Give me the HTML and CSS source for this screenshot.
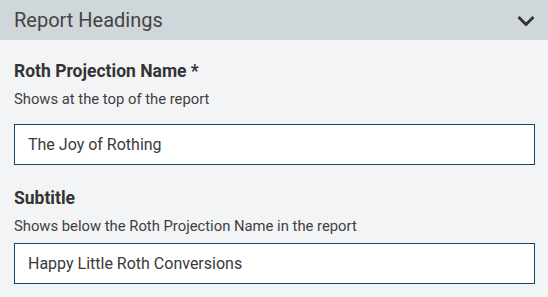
FILE: index.html
```html
<!DOCTYPE html>
<html>
<head>
<meta charset="utf-8">
<link rel="stylesheet" href="styles.css">
</head>
<body>
<section class="panel">
  <header class="panel-header">
    <span class="panel-title">Report Headings</span>
    <svg class="chevron" width="18" height="12" viewBox="0 0 18 12"><path d="M1.5 2 L9 9.5 L16.5 2" fill="none" stroke="#333" stroke-width="3"/></svg>
  </header>
  <div class="panel-body">
    <div class="field field--first">
      <label class="field-label">Roth Projection Name *</label>
      <div class="field-help">Shows at the top of the report</div>
      <div class="field-input">The Joy of Rothing</div>
    </div>
    <div class="field">
      <label class="field-label">Subtitle</label>
      <div class="field-help">Shows below the Roth Projection Name in the report</div>
      <div class="field-input">Happy Little Roth Conversions</div>
    </div>
  </div>
</section>
</body>
</html>
```
FILE: styles.css
```css
html, body { margin: 0; padding: 0; }
body {
  font-family: Roboto, "Liberation Sans", sans-serif;
  background: #f3f4f6;
  color: #333;
  width: 548px;
  height: 297px;
  overflow: hidden;
}
.panel-header {
  height: 40px;
  background: #d0d7db;
  display: flex;
  align-items: center;
  justify-content: space-between;
  padding: 0 13px 0 14px;
  box-sizing: border-box;
}
.panel-title {
  font-size: 20px;
  color: #444;
}
.chevron { display: block; margin-top: 1px; }
.panel-body {
  padding: 21px 13px 0 14px;
}
.field { margin-bottom: 23px; }
.field-label {
  display: block;
  font-weight: 700;
  font-size: 17.5px;
  line-height: 20px;
  color: #333;
}
.field-help {
  font-size: 14.8px;
  line-height: 20px;
  margin-top: 8px;
  color: #3f3f3f;
}
.field-input {
  margin-top: 7px;
  height: 41px;
  box-sizing: border-box;
  border: 1px solid #0c4a6e;
  background: #fff;
  display: flex;
  align-items: center;
  padding: 0 13px;
  font-size: 16px;
  color: #3a3a3a;
}
.field--first .field-input { margin-top: 15px; }
```
